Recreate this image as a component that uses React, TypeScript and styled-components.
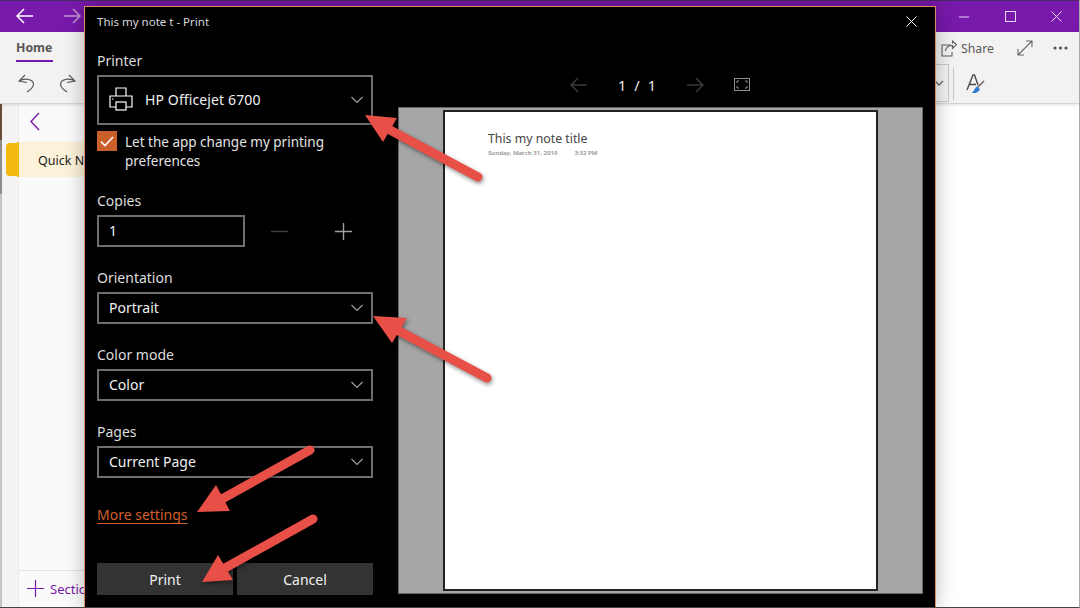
import React from "react";
import styled, { createGlobalStyle } from "styled-components";

const Global = createGlobalStyle`
  html, body { margin: 0; padding: 0; overflow: hidden; background: #fff; }
  * { box-sizing: border-box; }
  body { font-family: "Noto Sans", "Liberation Sans", sans-serif; }
`;

const Page = styled.div`
  position: relative;
  width: 1080px;
  height: 608px;
  overflow: hidden;
  display: flex;
  flex-direction: column;
  background: #fff;
  border-right: 1px solid #a9a9a9;
  border-bottom: 1px solid #444;
`;

const TitleBar = styled.header`
  height: 32px;
  flex: none;
  display: flex;
  justify-content: space-between;
  background: #7719aa;
  border-top: 1px solid #4d2a66;
`;
const BarGroup = styled.div`display: flex;`;
const BarButton = styled.div`
  width: ${(p) => p.$w ?? 46}px;
  display: flex;
  align-items: center;
  justify-content: center;
  padding-bottom: ${(p) => p.$lift ?? 0}px;
  color: #fff;
  opacity: ${(p) => p.$dim ? 0.55 : 1};
`;

const Ribbon = styled.section`
  height: 72px;
  flex: none;
  background: #f3f2f1;
  border-bottom: 1px solid #d6d5d4;
  box-shadow: 0 1px 3px rgba(0,0,0,.12);
  display: flex;
  flex-direction: column;
  position: relative;
  z-index: 1;
`;
const TabRow = styled.div`
  height: 32px;
  display: flex;
  justify-content: space-between;
  padding: 0 11px 0 16px;
`;
const Tab = styled.div`
  height: 30px;
  padding-top: 7px;
  width: 37px;
  font-size: 12.3px;
  font-weight: 700;
  line-height: 18px;
  color: #555;
  border-bottom: 2px solid #7719aa;
`;
const RibbonActions = styled.div`
  display: flex;
  align-items: center;
  color: #555;
`;
const ShareLabel = styled.span`
  font-size: 12.3px;
  margin: 0 23px 0 4px;
  color: #5a5a5a;
`;
const ToolRow = styled.div`
  flex: 1;
  display: flex;
  justify-content: space-between;
  padding: 0 94px 0 18px;
  color: #555;
`;
const ToolGroup = styled.div`
  display: flex;
  align-items: center;
  gap: ${(p) => p.$gap ?? 0}px;
`;
const FontBox = styled.div`
  width: 100px;
  height: 38px;
  margin-top: -1px;
  border: 1px solid #c8c8c8;
  display: flex;
  align-items: center;
  justify-content: flex-end;
  padding-right: 4px;
  color: #666;
`;
const ToolSeparator = styled.div`
  width: 1px;
  height: 32px;
  margin: 0 12px 0 4px;
  background: #c9c9c9;
`;

const Workspace = styled.main`
  flex: 1;
  display: flex;
  min-height: 0;
`;
const Rail = styled.div`
  width: 18px;
  flex: none;
  background:
    linear-gradient(to bottom, #6b4a3a 0 36px, #8d8d8d 36px 90px, #c4c4c4 90px 100%) left top / 2px 100% no-repeat,
    #f4f3f1;
`;
const SectionPanel = styled.div`
  width: 300px;
  flex: none;
  display: flex;
  flex-direction: column;
  background: #fbfafa;
  border-left: 1px solid #ececec;
  color: #7719aa;
`;
const BackRow = styled.div`
  height: 38px;
  padding: 8px 0 0 11px;
`;
const SectionItem = styled.div`
  position: relative;
  height: 35px;
  margin-left: -2px;
  background: #fcf2da;
  border-left: 2px solid #f2b90f;
  padding-left: 19px;
  font-size: 12.5px;
  line-height: 37px;
  color: #1a1a1a;
  &::before {
    content: "";
    position: absolute;
    left: -13px;
    top: 1px;
    width: 11px;
    height: 33px;
    border-radius: 4px 0 0 4px;
    background: #f2b90f;
  }
`;
const SectionFooter = styled.div`
  margin-top: auto;
  height: 37px;
  border-top: 1px solid #e4e3e2;
  display: flex;
  align-items: center;
  gap: 6px;
  padding: 0 0 1px 8px;
  font-size: 13px;
  color: #7719aa;
`;

const Dialog = styled.div`
  position: absolute;
  left: 84px;
  top: 6px;
  width: 852px;
  height: 602px;
  background: #000;
  border: 1px solid #e28a5f;
  box-shadow: 0 0 18px rgba(0,0,0,.28);
  display: flex;
  flex-direction: column;
  color: #fff;
  z-index: 2;
`;
const DialogHeader = styled.div`
  height: 43px;
  flex: none;
  display: flex;
  justify-content: space-between;
  padding: 6px 18px 0 12px;
`;
const DialogTitle = styled.div`
  font-size: 11.5px;
  line-height: 17px;
  color: #d8d8d8;
`;
const CloseGlyph = styled.div`
  padding-top: 3px;
  line-height: 0;
`;
const DialogBody = styled.div`
  flex: 1;
  min-height: 0;
  display: flex;
  padding: 0 12px 12px 12px;
`;
const Sidebar = styled.div`
  width: 276px;
  flex: none;
  display: flex;
  flex-direction: column;
  gap: 20px;
  margin-right: 25px;
`;
const Field = styled.div`
  display: flex;
  flex-direction: column;
`;
const Label = styled.div`
  font-size: 14px;
  line-height: 20px;
  margin-bottom: 5px;
  padding-top: 1px;
  height: 20px;
  color: #ddd;
`;
const Select = styled.div`
  height: ${(p) => p.$h ?? 32}px;
  border: 2px solid #6e6e6e;
  display: flex;
  align-items: center;
  padding: 0 8px 2px 10px;
  font-size: 14px;
  color: #f0f0f0;
`;
const SelectText = styled.span`
  flex: 1;
  margin-left: ${(p) => p.$indent ?? 0}px;
  letter-spacing: ${(p) => p.$track ?? 0}px;
`;
const ChevronSlot = styled.span`
  display: flex;
  margin: 2px -1px 0 0;
`;
const CheckRow = styled.div`
  display: flex;
  gap: 8px;
  margin-top: 6px;
`;
const CheckBox = styled.div`
  width: 20px;
  height: 20px;
  flex: none;
  background: #cb5f2b;
  display: flex;
  align-items: center;
  justify-content: center;
`;
const CheckLabel = styled.div`
  font-size: 13.5px;
  line-height: 19px;
  padding-top: 2px;
  color: #e4e4e4;
  width: 215px;
  height: 39px;
`;
const CopiesRow = styled.div`
  display: flex;
  align-items: center;
`;
const CopiesInput = styled.div`
  width: 148px;
  height: 32px;
  border: 2px solid #6e6e6e;
  padding-left: 10px;
  font-size: 14px;
  line-height: 28px;
  color: #f0f0f0;
  margin-right: 26px;
`;
const Stepper = styled.div`
  display: flex;
  gap: 47px;
  align-items: center;
`;
const MoreSettings = styled.a`
  font-size: 14px;
  line-height: 20px;
  margin-top: 7px;
  color: #d0602c;
  text-decoration: underline;
  text-underline-offset: 3px;
`;
const ButtonRow = styled.div`
  margin-top: auto;
  display: flex;
  gap: 4px;
`;
const ActionButton = styled.button`
  flex: 1;
  height: 32px;
  border: 0;
  padding: 0;
  background: #333;
  color: #f0f0f0;
  font: 14px "Noto Sans", sans-serif;
`;

const PreviewColumn = styled.div`
  flex: 1;
  min-width: 0;
  display: flex;
  flex-direction: column;
`;
const Pager = styled.div`
  height: 57px;
  flex: none;
  padding: 12px 0 0 172px;
  display: flex;
  align-items: center;
`;
const PageCount = styled.div`
  width: 38px;
  margin: 0 31px;
  font-size: 14.5px;
  display: flex;
  justify-content: space-between;
  color: #eee;
`;
const FitButton = styled.div`
  margin-left: 30px;
  line-height: 0;
`;
const Preview = styled.div`
  flex: 1;
  margin-bottom: 1px;
  background: #a6a6a6;
  border: 1px solid #666;
  display: flex;
  justify-content: center;
  padding-top: 2px;
`;
const Paper = styled.div`
  width: 435px;
  height: 481px;
  background: #fff;
  border: 2px solid #222;
  padding: 18px 0 0 43px;
`;
const NoteTitle = styled.div`
  font-size: 12.3px;
  line-height: 18px;
  color: #444;
`;
const NoteMeta = styled.div`
  display: flex;
  gap: 17px;
  margin-top: 1px;
  font-size: 6.1px;
  line-height: 8px;
  font-weight: 600;
  color: #8f8f8f;
`;

const Annotations = styled.svg`
  position: absolute;
  left: 0;
  top: 0;
  z-index: 3;
  pointer-events: none;
  filter: drop-shadow(1px 2px 2px rgba(0,0,0,.45));
`;

const Chevron = () => (
  <ChevronSlot>
    <svg width="14" height="8" viewBox="0 0 14 8" fill="none" stroke="#a0a0a0" strokeWidth="1.1">
      <path d="M1.5 1 L7 6.5 L12.5 1" />
    </svg>
  </ChevronSlot>
);

const Arrow = ({ dir, color, size = 17 }: { dir: "l" | "r"; color: string; size?: number }) => (
  <svg width={size} height="16" viewBox="0 0 17 16" fill="none" stroke={color} strokeWidth="1.5">
    {dir === "l" ? <path d="M8 1 L1 8 L8 15 M1 8 H17" /> : <path d="M9 1 L16 8 L9 15 M0 8 H16" />}
  </svg>
);

const SelectField = ({ label, value }: { label: string; value: string }) => (
  <Field>
    <Label>{label}</Label>
    <Select>
      <SelectText>{value}</SelectText>
      <Chevron />
    </Select>
  </Field>
);

const arrows = [
  { tail: "478,177", neck: "390,130", head: "365,115 397,118 383,142" },
  { tail: "487,378", neck: "399,331", head: "373,316 407,318 392,343" },
  { tail: "310,450", neck: "222,499", head: "197,512 216,485 230,511" },
  { tail: "313,519", neck: "225,568", head: "202,582 218,555 233,580" },
];

export default function App() {
  return (
    <Page>
      <Global />
      <TitleBar>
        <BarGroup>
          <BarButton $w={48} $lift={2}><Arrow dir="l" color="#fff" /></BarButton>
          <BarButton $w={48} $lift={2} $dim><Arrow dir="r" color="#fff" /></BarButton>
        </BarGroup>
        <BarGroup>
          <BarButton>
            <svg width="10" height="2" viewBox="0 0 10 2"><path d="M0 1 H10" stroke="#e8d6f0" strokeWidth="1" /></svg>
          </BarButton>
          <BarButton>
            <svg width="11" height="11" viewBox="0 0 11 11" fill="none"><rect x=".5" y=".5" width="10" height="10" stroke="#e8d6f0" /></svg>
          </BarButton>
          <BarButton>
            <svg width="11" height="11" viewBox="0 0 11 11" fill="none"><path d="M.5 .5 L10.5 10.5 M10.5 .5 L.5 10.5" stroke="#e8d6f0" /></svg>
          </BarButton>
        </BarGroup>
      </TitleBar>

      <Ribbon>
        <TabRow>
          <Tab>Home</Tab>
          <RibbonActions>
            <svg width="16" height="17" viewBox="0 0 16 17" fill="none" stroke="#5f5f5f" strokeWidth="1.1">
              <path d="M10 5 H1 V16 H11 V12" />
              <path d="M4.5 11 C5 7 8 5.5 11.5 5.5 V8.5 L15.5 4.5 L11.5 1 V3.5" />
            </svg>
            <ShareLabel>Share</ShareLabel>
            <svg width="16" height="16" viewBox="0 0 16 16" fill="none" stroke="#666" strokeWidth="1.1">
              <path d="M1 15 L15 1 M9 1 H15 V7 M1 9 V15 H7" />
            </svg>
            <svg width="15" height="4" viewBox="0 0 15 4" fill="#555" style={{ marginLeft: 20 }}>
              <circle cx="2" cy="2" r="1.6" /><circle cx="7.5" cy="2" r="1.6" /><circle cx="13" cy="2" r="1.6" />
            </svg>
          </RibbonActions>
        </TabRow>
        <ToolRow>
          <ToolGroup $gap={24}>
            <svg width="17" height="19" viewBox="0 0 17 19" fill="none" stroke="#5a5a5a" strokeWidth="1.2">
              <path d="M7 1 L1 7 L9 8.5 M1 7 C6 4 15 4.5 15.5 10 C15.5 13 13 15.5 9 18" />
            </svg>
            <svg width="17" height="19" viewBox="0 0 17 19" fill="none" stroke="#5a5a5a" strokeWidth="1.2">
              <path d="M10 1 L16 7 L8 8.5 M16 7 C11 4 2 4.5 1.5 10 C1.5 13 4 15.5 8 18" />
            </svg>
          </ToolGroup>
          <ToolGroup>
            <FontBox>
              <svg width="10" height="6" viewBox="0 0 10 6" fill="none" stroke="#666" strokeWidth="1.3"><path d="M1 1 L5 5 L9 1" /></svg>
            </FontBox>
            <ToolSeparator />
            <svg width="19" height="20" viewBox="0 0 19 20" fill="none">
              <path d="M1 16 L7 1 L8.5 1 L12 11 M3.5 10.5 H10" stroke="#4a4a4a" strokeWidth="1.4" />
              <path d="M18 7 L11 14" stroke="#6a6a6a" strokeWidth="1.6" />
              <path d="M10.5 12.5 L14 15 C12.5 18.5 9 19.5 5.5 19 C8 17.5 8.5 14.5 10.5 12.5 Z" fill="#2b7cd3" />
            </svg>
          </ToolGroup>
        </ToolRow>
      </Ribbon>

      <Workspace>
        <Rail />
        <SectionPanel>
          <BackRow>
            <svg width="10" height="19" viewBox="0 0 10 19" fill="none" stroke="#7719aa" strokeWidth="1.4">
              <path d="M9 1 L1 9.5 L9 18" />
            </svg>
          </BackRow>
          <SectionItem>Quick Notes</SectionItem>
          <SectionFooter>
            <svg width="17" height="17" viewBox="0 0 17 17" stroke="#7719aa" strokeWidth="1.2">
              <path d="M8.5 0 V17 M0 8.5 H17" />
            </svg>
            Section
          </SectionFooter>
        </SectionPanel>
      </Workspace>

      <Dialog>
        <DialogHeader>
          <DialogTitle>This my note t - Print</DialogTitle>
          <CloseGlyph>
            <svg width="11" height="11" viewBox="0 0 11 11" fill="none" stroke="#fff"><path d="M.5 .5 L10.5 10.5 M10.5 .5 L.5 10.5" /></svg>
          </CloseGlyph>
        </DialogHeader>
        <DialogBody>
          <Sidebar>
            <Field>
              <Label>Printer</Label>
              <Select $h={50}>
                <svg width="24" height="24" viewBox="0 0 24 24" fill="none" stroke="#fff" strokeWidth="1.2">
                  <path d="M7 9 V1 H17 V9" />
                  <path d="M7 20 H1 V9 H23 V20 H17" />
                  <rect x="7" y="15" width="10" height="8" />
                  <path d="M3 12 H4.5" />
                </svg>
                <SelectText $indent={12} $track={0.12}>HP Officejet 6700</SelectText>
                <Chevron />
              </Select>
              <CheckRow>
                <CheckBox>
                  <svg width="14" height="11" viewBox="0 0 14 11" fill="none" stroke="#fff" strokeWidth="1.6"><path d="M1 5.5 L5 9.5 L13 1" /></svg>
                </CheckBox>
                <CheckLabel>Let the app change my printing preferences</CheckLabel>
              </CheckRow>
            </Field>
            <Field>
              <Label>Copies</Label>
              <CopiesRow>
                <CopiesInput>1</CopiesInput>
                <Stepper>
                  <svg width="17" height="17" viewBox="0 0 17 17" stroke="#3d3d3d" strokeWidth="1.4"><path d="M0 8.5 H17" /></svg>
                  <svg width="17" height="17" viewBox="0 0 17 17" stroke="#a0a0a0" strokeWidth="1.4"><path d="M0 8.5 H17 M8.5 0 V17" /></svg>
                </Stepper>
              </CopiesRow>
            </Field>
            <SelectField label="Orientation" value="Portrait" />
            <SelectField label="Color mode" value="Color" />
            <SelectField label="Pages" value="Current Page" />
            <MoreSettings>More settings</MoreSettings>
            <ButtonRow>
              <ActionButton>Print</ActionButton>
              <ActionButton>Cancel</ActionButton>
            </ButtonRow>
          </Sidebar>
          <PreviewColumn>
            <Pager>
              <Arrow dir="l" color="#3a3a3a" />
              <PageCount><span>1</span><span>/</span><span>1</span></PageCount>
              <Arrow dir="r" color="#3a3a3a" />
              <FitButton>
                <svg width="16" height="13" viewBox="0 0 16 13" fill="none" stroke="#8e8e8e">
                  <rect x=".5" y=".5" width="15" height="12" />
                  <path d="M3 5 V3 H5 M11 3 H13 V5 M13 8 V10 H11 M5 10 H3 V8" />
                </svg>
              </FitButton>
            </Pager>
            <Preview>
              <Paper>
                <NoteTitle>This my note title</NoteTitle>
                <NoteMeta><span>Sunday, March 31, 2019</span><span>3:32 PM</span></NoteMeta>
              </Paper>
            </Preview>
          </PreviewColumn>
        </DialogBody>
      </Dialog>

      <Annotations width="1080" height="608" viewBox="0 0 1080 608">
        {arrows.map((a) => {
          const [tx, ty] = a.tail.split(",");
          const [nx, ny] = a.neck.split(",");
          return (
            <g key={a.tail}>
              <line x1={tx} y1={ty} x2={nx} y2={ny} stroke="#e84f47" strokeWidth="9" strokeLinecap="round" />
              <polygon points={a.head} fill="#e84f47" />
            </g>
          );
        })}
      </Annotations>
    </Page>
  );
}
